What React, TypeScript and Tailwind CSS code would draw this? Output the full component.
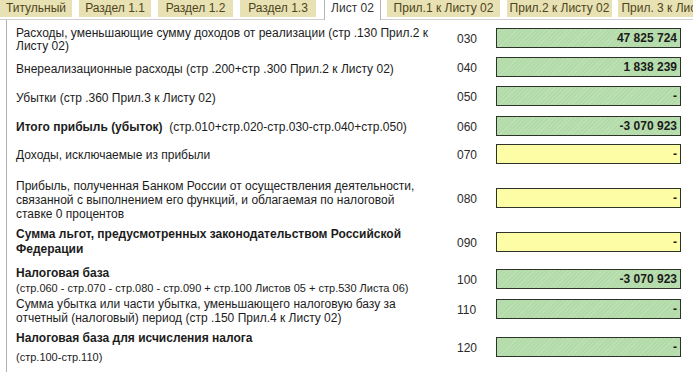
import React from 'react';

const green =
  'bg-[repeating-linear-gradient(135deg,#b3dba9_0px,#b3dba9_2px,#bde1b4_2px,#bde1b4_3px)]';
const yellow = 'bg-[#fdfda6]';

type Row = {
  code: string;
  value: string;
  tone: 'g' | 'y';
  h: string;
  label: React.ReactNode;
};

const rows: Row[] = [
  {
    code: '030',
    value: '47 825 724',
    tone: 'g',
    h: 'h-[36px]',
    label: (
      <div className="leading-[13px] pt-[4px]">
        Расходы, уменьшающие сумму доходов от реализации (стр .130 Прил.2 к
        <br />
        Листу 02)
      </div>
    ),
  },
  {
    code: '040',
    value: '1 838 239',
    tone: 'g',
    h: 'h-[22px]',
    label: <div className="pt-[4px]">Внереализационные расходы (стр .200+стр .300 Прил.2 к Листу 02)</div>,
  },
  {
    code: '050',
    value: '-',
    tone: 'g',
    h: 'h-[36px]',
    label: <div className="pt-[4px]">Убытки (стр .360 Прил.3 к Листу 02)</div>,
  },
  {
    code: '060',
    value: '-3 070 923',
    tone: 'g',
    h: 'h-[24px]',
    label: (
      <div className="pt-[2px]">
        <span className="font-bold">Итого прибыль (убыток)</span>&nbsp; (стр.010+стр.020-стр.030-стр.040+стр.050)
      </div>
    ),
  },
  {
    code: '070',
    value: '-',
    tone: 'y',
    h: 'h-[32px]',
    label: <div className="pt-[2px]">Доходы, исключаемые из прибыли</div>,
  },
  {
    code: '080',
    value: '-',
    tone: 'y',
    h: 'h-[56px]',
    label: (
      <div className="leading-[14px] pt-[3px]">
        Прибыль, полученная Банком России от осуществления деятельности,
        <br />
        связанной с выполнением его функций, и облагаемая по налоговой
        <br />
        ставке 0 процентов
      </div>
    ),
  },
  {
    code: '090',
    value: '-',
    tone: 'y',
    h: 'h-[31px]',
    label: (
      <div className="leading-[15px] font-bold">
        Сумма льгот, предусмотренных законодательством Российской
        <br />
        Федерации
      </div>
    ),
  },
  {
    code: '100',
    value: '-3 070 923',
    tone: 'g',
    h: 'h-[44px]',
    label: (
      <div className="pt-[3px]">
        <div className="font-bold leading-[15px]">Налоговая база</div>
        <div className="text-[11px] leading-[15px]">
          (стр.060 - стр.070 - стр.080 - стр.090 + стр.100 Листов 05 + стр.530 Листа 06)
        </div>
      </div>
    ),
  },
  {
    code: '110',
    value: '-',
    tone: 'g',
    h: 'h-[16px]',
    label: (
      <div className="leading-[14px] pt-[4px]">
        Сумма убытка или части убытка, уменьшающего налоговую базу за
        <br />
        отчетный (налоговый) период (стр .150 Прил.4 к Листу 02)
      </div>
    ),
  },
  {
    code: '120',
    value: '-',
    tone: 'g',
    h: 'h-[59px]',
    label: (
      <div className="pt-[2px]">
        <div className="font-bold leading-[15px]">Налоговая база для исчисления налога</div>
        <div className="text-[11px] leading-[15px] mt-[4px]">(стр.100-стр.110)</div>
      </div>
    ),
  },
];

const tabs = [
  { t: 'Титульный', w: 'w-[72px]', ml: '' },
  { t: 'Раздел 1.1', w: 'w-[72px]', ml: 'ml-[7px]' },
  { t: 'Раздел 1.2', w: 'w-[75px]', ml: 'ml-[7px]' },
  { t: 'Раздел 1.3', w: 'w-[76px]', ml: 'ml-[7px]' },
];
const tabsAfter = [
  { t: 'Прил.1 к Листу 02', w: 'w-[113px]', ml: 'ml-[6px]' },
  { t: 'Прил.2 к Листу 02', w: 'w-[105px]', ml: 'ml-[7px]' },
  { t: 'Прил. 3 к Листу 02', w: 'w-[110px]', ml: 'ml-[6px]' },
];

function Tab({ t, w, ml }: { t: string; w: string; ml: string }) {
  return (
    <div
      className={`${w} ${ml} shrink-0 h-[17px] bg-[#e8e1b3] text-[#4d4420] text-[12px] leading-[17px] text-center whitespace-nowrap overflow-hidden`}
    >
      {t}
    </div>
  );
}

export default function App() {
  return (
    <div
      className="w-[693px] h-[372px] overflow-hidden bg-white text-[#1c1c1c] text-[12px] leading-[14px]"
      style={{ fontFamily: '"Liberation Sans", Arial, sans-serif' }}
    >
      <div className="flex items-start h-[20px] border-b border-[#cfcfcf]">
        {tabs.map((x) => (
          <Tab key={x.t} {...x} />
        ))}
        <div className="ml-[8px] w-[57px] shrink-0 h-[20px] bg-white border-x border-[#b5b5b5] text-[#333] text-[12px] leading-[17px] text-center relative z-10 -mb-px">
          Лист 02
        </div>
        {tabsAfter.map((x) => (
          <Tab key={x.t} {...x} />
        ))}
      </div>
      <div className="ml-[6px] border-l border-[#b0b0b0] h-[352px] pl-[9px]">
        {rows.map((r) => (
          <div key={r.code} className={`flex items-center ${r.h}`}>
            <div className="w-[439px] shrink-0 whitespace-nowrap">{r.label}</div>
            <div className="w-[41px] shrink-0 pl-[2px] pt-[2px] text-[#2a2a2a]">{r.code}</div>
            <div
              className={`w-[185px] h-[20px] shrink-0 border border-[#2e3329] ${
                r.tone === 'g' ? green : yellow
              } text-right font-bold pr-[3px] leading-[18px]`}
            >
              {r.value}
            </div>
          </div>
        ))}
      </div>
    </div>
  );
}
